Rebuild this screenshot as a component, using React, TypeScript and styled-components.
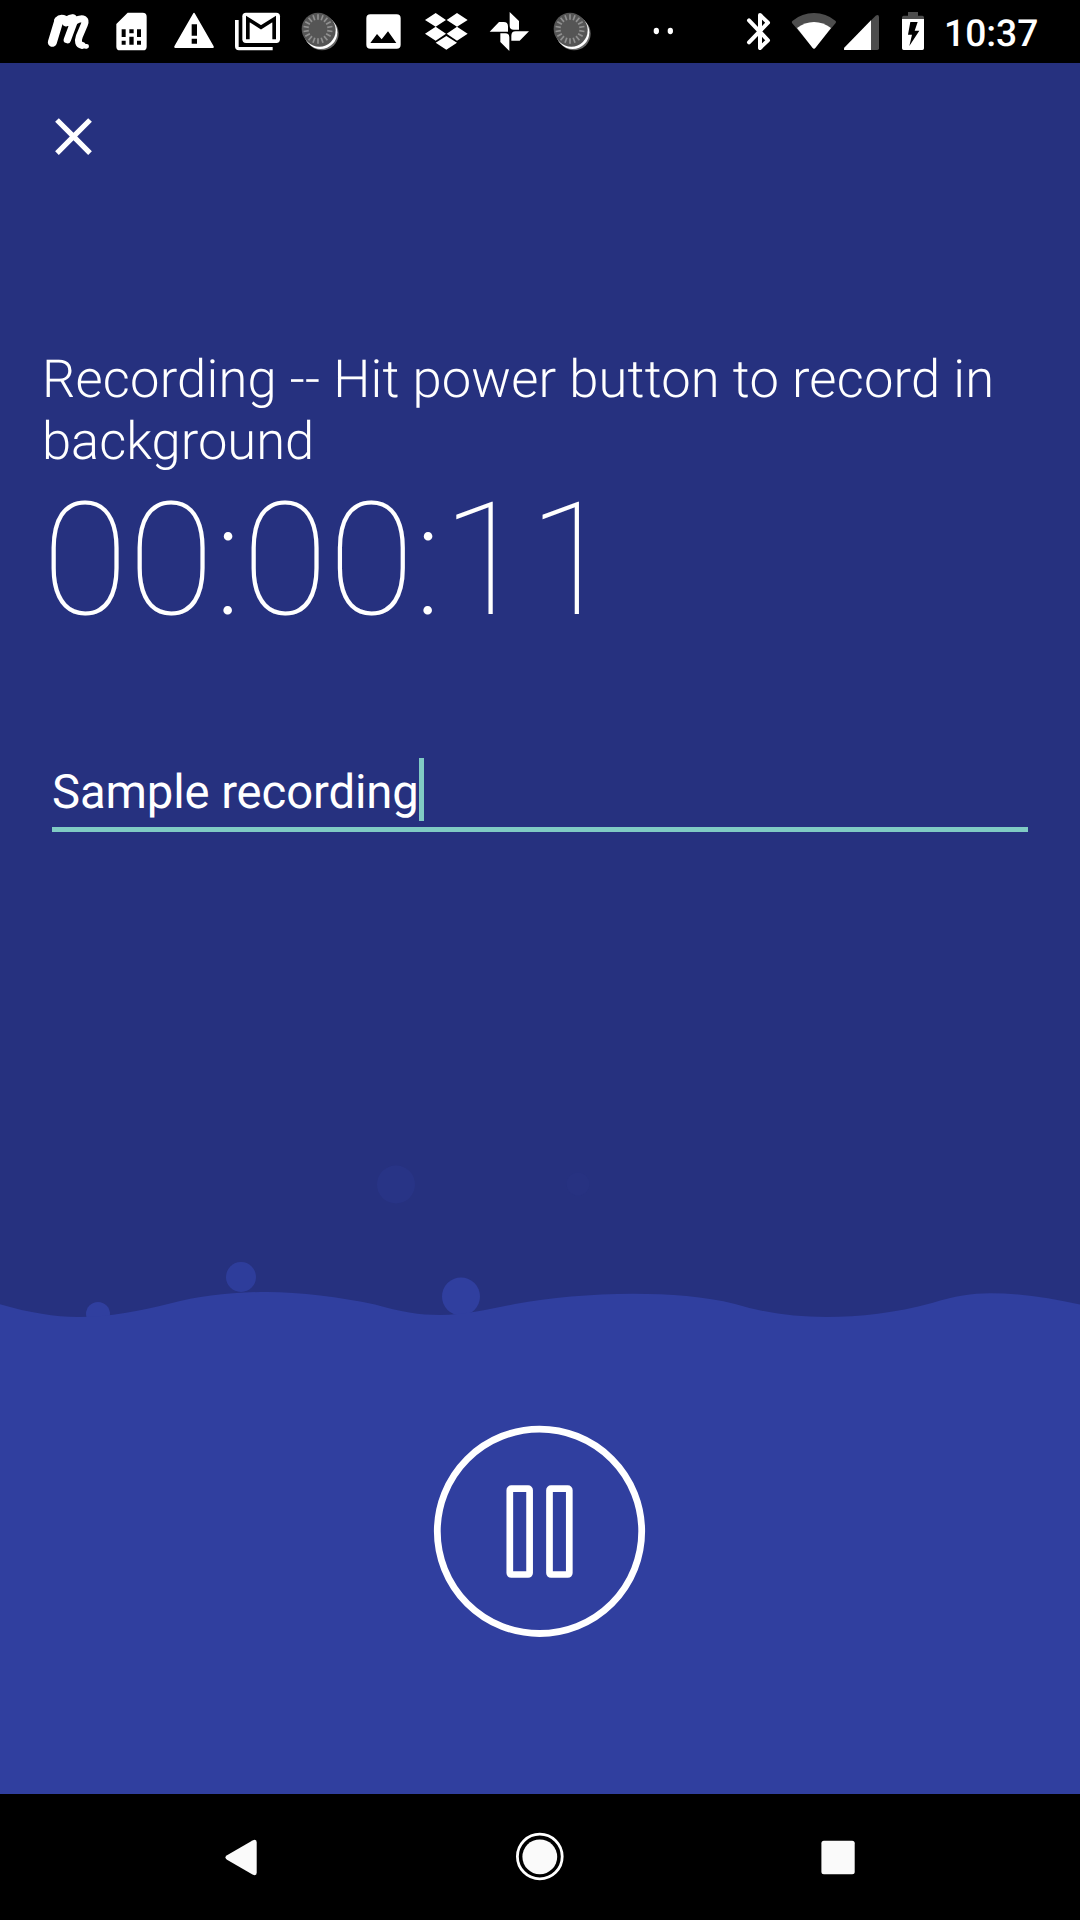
import React from "react";
import styled, { createGlobalStyle } from "styled-components";

const Global = createGlobalStyle`
  * { box-sizing: border-box; }
  body { margin: 0; background: #000; }
`;

const Screen = styled.div`
  width: 1080px;
  height: 1920px;
  display: flex;
  flex-direction: column;
  overflow: hidden;
  background: #26317f;
  color: #fff;
  font-family: Roboto, "Liberation Sans", sans-serif;
  text-rendering: geometricPrecision;
`;

const StatusBar = styled.header`
  height: 63px;
  flex: none;
  display: flex;
  align-items: center;
  padding-left: 37px;
  background: #000;
`;

const Notifications = styled.div`
  display: flex;
`;

const SystemIcons = styled.div`
  display: flex;
  margin-left: auto;
`;

const Glyph = styled.svg<{ $w: number }>`
  display: block;
  flex: none;
  width: ${(p) => p.$w}px;
  height: 63px;
  fill: #fff;
`;

const MoreDots = styled(Glyph)`
  margin-left: 46px;
`;

const Clock = styled.span`
  width: 140px;
  padding: 3px 0 0 4px;
  font-size: 37.2px;
  font-weight: 500;
  line-height: 62px;
  height: 63px;
  white-space: nowrap;
`;

const Recorder = styled.main`
  height: 1087px;
  flex: none;
  display: flex;
  flex-direction: column;
  align-items: flex-start;
`;

const CloseButton = styled.button`
  width: 63px;
  height: 63px;
  margin: 42px 0 0 42px;
  padding: 0;
  border: 0;
  background: none;
  svg { display: block; width: 63px; height: 63px; fill: #fff; }
`;

const Heading = styled.h1`
  margin: 180px 42px 0;
  font-size: 52.5px;
  font-weight: 300;
  line-height: 62px;
`;

const HeadingLead = styled.span`
  letter-spacing: 0.175px;
`;

const Timer = styled.div`
  margin-left: 42px;
  font-size: 157.5px;
  font-weight: 100;
  line-height: 178px;
  letter-spacing: -0.12px;
  white-space: nowrap;
`;

const NameField = styled.div`
  width: 976px;
  height: 74px;
  margin: 108px 0 0 52px;
  display: flex;
  align-items: flex-start;
  border-bottom: 5px solid #80cbc4;
`;

const NameText = styled.span`
  padding-top: 6px;
  font-size: 47.25px;
  line-height: 56px;
  letter-spacing: -0.12px;
  white-space: nowrap;
`;

const Caret = styled.span`
  width: 5px;
  height: 63px;
  background: #80cbc4;
`;

const Waves = styled.svg`
  display: block;
  flex: none;
  width: 1080px;
  height: 170px;
  fill: #303f9f;
`;

const Controls = styled.section`
  flex: 1;
  display: flex;
  justify-content: center;
  align-items: flex-start;
  padding: 105px 1px 0 0;
  background: #303f9f;
`;

const PauseButton = styled.button`
  width: 213px;
  height: 213px;
  padding: 0;
  border: 0;
  background: none;
  svg { display: block; fill: none; stroke: #fff; }
`;

const NavBar = styled.nav`
  height: 126px;
  flex: none;
  display: flex;
  align-items: center;
  justify-content: space-between;
  padding: 0 210px;
  background: #000;
  svg { display: block; fill: #fafafa; }
`;

const Busy = ({ x }: { x: number }) => (
  <Glyph $w={63} viewBox={`${x} 0 189 189`}>
    <circle cx="96" cy="101" r="50" fill="#666" />
    <circle cx="92" cy="97" r="50" fill="#fff" />
    <circle cx="88" cy="91" r="49" fill="#555" />
    <circle cx="84" cy="87" r="49" fill="#555" />
    <g stroke="#909090" strokeWidth="5">
      {Array.from({ length: 18 }, (_, i) => (
        <path key={i} d="M84 43V59" transform={`rotate(${i * 20} 84 87)`} />
      ))}
    </g>
  </Glyph>
);

const bubbles = [
  { x: 98, y: 1314, r: 12, o: 1 },
  { x: 241, y: 1277, r: 15, o: 0.9 },
  { x: 461, y: 1296.5, r: 19, o: 1 },
  { x: 396, y: 1184.5, r: 19, o: 0.22 },
  { x: 578, y: 1184, r: 11.5, o: 0.08 },
];

export default function App() {
  return (
    <Screen>
      <Global />
      <StatusBar>
        <Notifications>
          <Glyph $w={63} viewBox="21 0 189 189">
            <g fill="none" stroke="#fff" strokeLinecap="round" strokeLinejoin="round">
              <path d="M67 127L86 64" strokeWidth="27" />
              <path d="M86 62Q91 56 99 58L116 65" strokeWidth="27" />
              <path d="M128 54Q112 56 108 68" strokeWidth="22" />
              <path d="M128 55Q136 56 131 68L112 119" strokeWidth="22" />
              <path d="M134 64Q152 53 162 58Q168 62 163 74L148 109Q140 132 156 136" strokeWidth="21" />
              <path d="M151 132Q159 140 170 139" strokeWidth="14" />
            </g>
          </Glyph>
          <Glyph $w={63} viewBox="210 0 189 189">
            <path
              fillRule="evenodd"
              d="M293 38H338Q350 38 350 50V140Q350 151 339 151H270Q259 151 259 140V72ZM275 88v23h12v-23zM298 88v12h13v-12zM321 88v23h12v-23zM275 122v12h12v-12zM298 110v24h13v-24zM321 122v12h12v-12z"
            />
          </Glyph>
          <Glyph $w={63} viewBox="399 0 189 189">
            <path
              fillRule="evenodd"
              d="M489 41Q492 36 495 41L551 139Q553 144 549 144H436Q431 144 433 139ZM485 73v34h16v-34zM485 116v15h16v-15z"
            />
          </Glyph>
          <Glyph $w={63} viewBox="588 0 189 189">
            <path d="M615 60h11v81h102v10H627Q615 151 615 139Z" />
            <rect x="637" y="38" width="113" height="91" rx="11" />
            <path d="M653.500 118V57L693 82L732.500 57V118" fill="none" stroke="#000" strokeWidth="11" />
          </Glyph>
          <Busy x={-3} />
          <Glyph $w={63} viewBox="186 0 189 189">
            <path
              fillRule="evenodd"
              d="M241 43H320Q332 43 332 55V134Q332 146 320 146H241Q229 146 229 134V55Q229 43 241 43ZM241 129H319L294 94L275 118L261 102Z"
            />
          </Glyph>
          <Glyph $w={63} viewBox="375 0 189 189">
            <path d="M437 39L468 60L437 80L405 60ZM501 39L533 60L501 80L470 60ZM437 80L468 101L437 122L405 101ZM501 80L533 101L501 122L470 101ZM469 108L501 128L469 149L437 128Z" />
          </Glyph>
          <Glyph $w={63} viewBox="564 0 189 189">
            <path d="M659 36L687 63V89H671Q659 89 659 77ZM599 95L627 66H641Q654 66 654 79V95ZM658 153L631 126V100H646Q658 100 658 112ZM717 94L689 122H664V107Q664 94 677 94Z" />
          </Glyph>
          <Busy x={-3} />
        </Notifications>
        <MoreDots $w={30} viewBox="60 0 90 189">
          <ellipse cx="79" cy="93" rx="8" ry="9.500" />
          <ellipse cx="121" cy="93" rx="8" ry="9.500" />
        </MoreDots>
        <SystemIcons>
          <Glyph $w={50} viewBox="330 0 150 189">
            <path
              d="M357 61L414 121L390 144V45L414 68L357 127"
              fill="none"
              stroke="#fff"
              strokeWidth="12"
              strokeLinecap="round"
              strokeLinejoin="round"
            />
          </Glyph>
          <Glyph $w={52} viewBox="480 0 156 189">
            <path fill="#4d4d4d" d="M488 62Q516 39 552 39T616 62Q620 65 617 69L552 147L486 69Q484 65 488 62Z" />
            <path d="M501 84Q524 66 552 66T603 84L556 144Q552 149 548 144Z" />
          </Glyph>
          <Glyph $w={48} viewBox="636 0 144 189">
            <path fill="#4d4d4d" d="M642 150V143L737 47Q747 42 747 52V145Q747 150 742 150Z" />
            <path d="M723 61V150H645Q640 150 643 143Z" />
          </Glyph>
          <Glyph $w={50} viewBox="780 0 150 189">
            <path fill="#4d4d4d" d="M834 36H864V47H877Q882 47 882 53V58H816V53Q816 47 821 47H834Z" />
            <path fillRule="evenodd" d="M816 57H882V145Q882 150 877 150H821Q816 150 816 145ZM841 66L834 104H846L838 138L868 92H854L863 66Z" />
          </Glyph>
          <Clock>10:37</Clock>
        </SystemIcons>
      </StatusBar>

      <Recorder>
        <CloseButton aria-label="Close">
          <svg viewBox="0 0 24 24">
            <path d="M19 6.410L17.590 5 12 10.590 6.410 5 5 6.410 10.590 12 5 17.590 6.410 19 12 13.410 17.590 19 19 17.590 13.410 12z" />
          </svg>
        </CloseButton>
        <Heading>
          <HeadingLead>Recording -- Hit power button to record in</HeadingLead> background
        </Heading>
        <Timer>00:00:11</Timer>
        <NameField>
          <NameText>Sample recording</NameText>
          <Caret />
        </NameField>
      </Recorder>

      <Waves viewBox="0 1150 1080 170">
        {bubbles.map((b) => (
          <circle key={b.x} cx={b.x} cy={b.y} r={b.r} opacity={b.o} />
        ))}
        <path d="M0 1304.300C30 1313 55 1317 78 1317C110 1317 140 1311 170 1303.500C200 1296 230 1292 267 1292C300 1292 340 1297 375 1304.500C400 1312 420 1315 440 1315C465 1315 490 1309 515 1304C550 1298 590 1293.800 633 1293.800C670 1293.800 705 1296.500 735 1304C765 1313 795 1317 826 1317C860 1317 895 1313 932 1303C955 1296 972 1293.200 990 1293.200C1020 1293.200 1050 1298 1080 1304.500V1320H0Z" />
      </Waves>

      <Controls>
        <PauseButton aria-label="Pause">
          <svg width="213" height="213" viewBox="433 1425 213 213">
            <circle cx="539.500" cy="1531.300" r="102.200" strokeWidth="6.800" />
            <g strokeWidth="6.700" strokeLinejoin="round">
              <rect x="509.800" y="1488.700" width="19.800" height="85.800" rx="1.500" />
              <rect x="549.500" y="1488.700" width="19.800" height="85.800" rx="1.500" />
            </g>
          </svg>
        </PauseButton>
      </Controls>

      <NavBar>
        <svg width="63" height="63" viewBox="210 1825.500 63 63">
          <path d="M227 1854.800L252.500 1840Q256.700 1838 256.700 1842V1872Q256.700 1876 252.500 1874L227 1859.200Q223.800 1857 227 1854.800Z" />
        </svg>
        <svg width="63" height="63" viewBox="508.500 1825.500 63 63">
          <circle cx="539.300" cy="1856" r="22.400" fill="none" stroke="#fff" strokeWidth="2.800" />
          <circle cx="539.300" cy="1856.300" r="17.400" />
        </svg>
        <svg width="63" height="63" viewBox="807 1825.500 63 63">
          <rect x="821.400" y="1840.300" width="33.300" height="33.400" rx="2.500" />
        </svg>
      </NavBar>
    </Screen>
  );
}
